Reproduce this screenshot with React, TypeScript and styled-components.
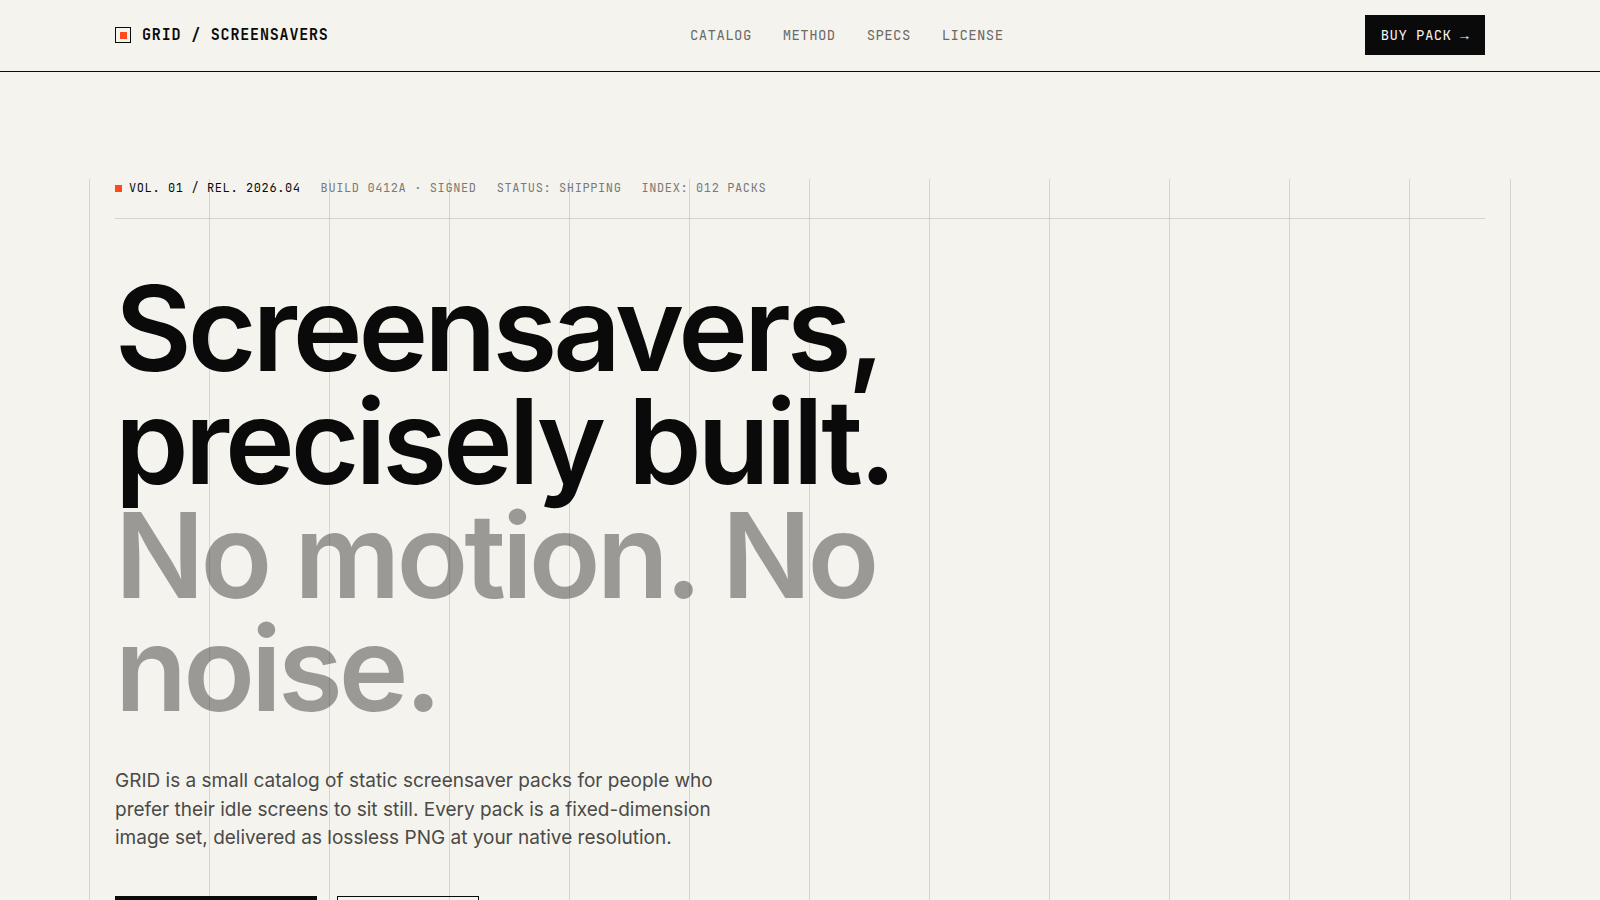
import React from "react";
import styled, { createGlobalStyle } from "styled-components";

const ink = "#0a0a0a";
const paper = "#f5f3ee";
const accent = "#ff4a1c";
const rule = "rgba(10, 10, 10, 0.13)";
const mono = `"JetBrains Mono", "Roboto Mono", "Liberation Mono", monospace`;

const GlobalStyle = createGlobalStyle`
  *, *::before, *::after { box-sizing: border-box; }
  body {
    margin: 0;
    background: ${paper};
    color: ${ink};
    font-family: Inter, "Liberation Sans", sans-serif;
    -webkit-font-smoothing: antialiased;
  }
`;

const Header = styled.header`
  border-bottom: 1px solid ${ink};
`;

const HeaderInner = styled.div`
  display: flex;
  align-items: center;
  justify-content: space-between;
  max-width: 1422px;
  margin: 0 auto;
  padding: 15px 26px 16px;
  font-family: ${mono};
`;

const Brand = styled.a`
  display: flex;
  align-items: center;
  gap: 11px;
  color: ${ink};
  font-size: 15px;
  font-weight: 700;
  line-height: 20px;
  letter-spacing: 0.055em;
  text-decoration: none;
`;

const BrandMark = styled.span`
  display: grid;
  place-items: center;
  width: 16px;
  height: 16px;
  border: 1px solid ${ink};

  &::before {
    content: "";
    width: 7px;
    height: 7px;
    background: ${accent};
  }
`;

const Nav = styled.nav`
  display: flex;
  gap: 31px;
`;

const NavLink = styled.a`
  color: #6b6a66;
  font-size: 14px;
  line-height: 20px;
  letter-spacing: 0.03em;
  text-decoration: none;
`;

const BuyButton = styled.button`
  height: 40px;
  padding: 0 16px;
  border: 0;
  background: ${ink};
  color: ${paper};
  font-family: ${mono};
  font-size: 14px;
  letter-spacing: 0.03em;
  cursor: pointer;
`;

const Arrow = styled.span`
  font-family: "Liberation Mono", monospace;
`;

const Hero = styled.section`
  max-width: 1422px;
  margin: 107px auto 0;
  padding: 0 25px 96px 26px;
  border-right: 1px solid ${rule};
  background: repeating-linear-gradient(
    to right,
    ${rule} 0 1px,
    transparent 1px 120px
  );
  background-clip: padding-box;
`;

const Meta = styled.div`
  display: flex;
  gap: 20px;
  padding-bottom: 21px;
  border-bottom: 1px solid ${rule};
  font-family: ${mono};
  font-size: 12px;
  line-height: 18px;
  letter-spacing: 0.05em;
`;

const MetaItem = styled.span<{ $strong?: boolean }>`
  display: flex;
  align-items: center;
  gap: 7px;
  color: ${(p) => (p.$strong ? ink : "#7b7a76")};
`;

const Dot = styled.span`
  width: 7px;
  height: 7px;
  background: ${accent};
`;

const Headline = styled.h1`
  max-width: 860px;
  margin: 53px 0 0;
  font-size: 118px;
  font-weight: 600;
  line-height: 0.96;
  letter-spacing: -4px;
`;

const Muted = styled.span`
  display: block;
  opacity: 0.38;
`;

const Lede = styled.p`
  max-width: 620px;
  margin: 42px 0 0;
  color: #4a4a47;
  font-size: 19px;
  line-height: 1.5;
`;

const Actions = styled.div`
  display: flex;
  gap: 20px;
  margin-top: 43px;
`;

const Action = styled.button<{ $primary?: boolean }>`
  min-width: ${(p) => (p.$primary ? 202 : 142)}px;
  height: 52px;
  border: 1px solid ${ink};
  background: ${(p) => (p.$primary ? ink : "transparent")};
  cursor: pointer;
`;

const links = ["CATALOG", "METHOD", "SPECS", "LICENSE"];
const facts = ["BUILD 0412A · SIGNED", "STATUS: SHIPPING", "INDEX: 012 PACKS"];

export default function App() {
  return (
    <>
      <GlobalStyle />
      <Header>
        <HeaderInner>
          <Brand href="#top">
            <BrandMark aria-hidden="true" />
            GRID / SCREENSAVERS
          </Brand>
          <Nav aria-label="Main">
            {links.map((label) => (
              <NavLink key={label} href={`#${label.toLowerCase()}`}>
                {label}
              </NavLink>
            ))}
          </Nav>
          <BuyButton type="button">
            BUY PACK <Arrow>→</Arrow>
          </BuyButton>
        </HeaderInner>
      </Header>
      <main>
        <Hero>
          <Meta>
            <MetaItem $strong>
              <Dot aria-hidden="true" />
              VOL. 01 / REL. 2026.04
            </MetaItem>
            {facts.map((fact) => (
              <MetaItem key={fact}>{fact}</MetaItem>
            ))}
          </Meta>
          <Headline>
            Screensavers, precisely built. <Muted>No motion. No noise.</Muted>
          </Headline>
          <Lede>
            GRID is a small catalog of static screensaver packs for people who
            prefer their idle screens to sit still. Every pack is a
            fixed-dimension image set, delivered as lossless PNG at your native
            resolution.
          </Lede>
          <Actions>
            <Action type="button" $primary aria-label="Browse catalog" />
            <Action type="button" aria-label="Method" />
          </Actions>
        </Hero>
      </main>
    </>
  );
}
